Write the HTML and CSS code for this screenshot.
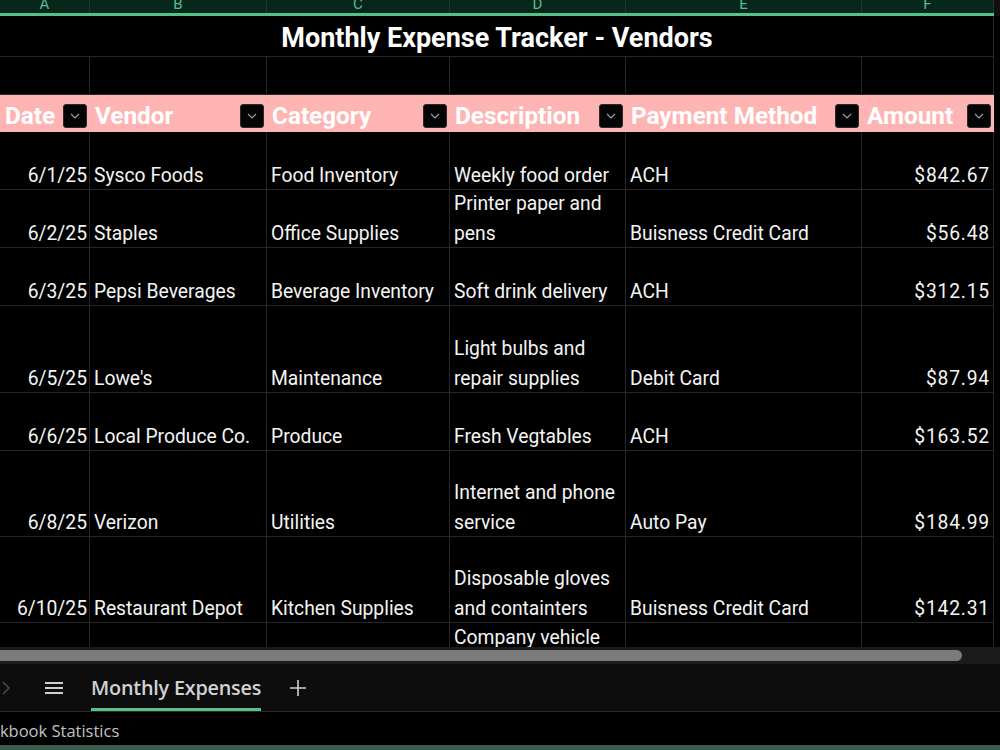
FILE: index.html
```html
<!DOCTYPE html>
<html lang="en">
<head>
  <meta charset="utf-8">
  <meta name="viewport" content="width=device-width, initial-scale=1">
  <title>Monthly Expenses</title>
  <link rel="stylesheet" href="styles.css">
</head>
<body>
  <div class="app">
    <!-- column letters -->
    <div class="colbar">
      <div class="cols">
        <span>A</span><span>B</span><span>C</span><span>D</span><span>E</span><span>F</span>
      </div>
      <div class="colbar-rest"></div>
    </div>

    <div class="sheet">
      <div class="grid">
        <div class="cell title">Monthly Expense Tracker - Vendors</div>

        <div class="cell"></div><div class="cell"></div><div class="cell"></div>
        <div class="cell"></div><div class="cell"></div><div class="cell"></div>

        <div class="cell head"><span>Date</span><button class="filter" aria-label="Filter Date"><svg viewBox="0 0 10 6" width="10" height="6"><path d="M1 1l4 4 4-4"/></svg></button></div>
        <div class="cell head"><span>Vendor</span><button class="filter" aria-label="Filter Vendor"><svg viewBox="0 0 10 6" width="10" height="6"><path d="M1 1l4 4 4-4"/></svg></button></div>
        <div class="cell head"><span>Category</span><button class="filter" aria-label="Filter Category"><svg viewBox="0 0 10 6" width="10" height="6"><path d="M1 1l4 4 4-4"/></svg></button></div>
        <div class="cell head"><span>Description</span><button class="filter" aria-label="Filter Description"><svg viewBox="0 0 10 6" width="10" height="6"><path d="M1 1l4 4 4-4"/></svg></button></div>
        <div class="cell head"><span>Payment Method</span><button class="filter" aria-label="Filter Payment Method"><svg viewBox="0 0 10 6" width="10" height="6"><path d="M1 1l4 4 4-4"/></svg></button></div>
        <div class="cell head"><span>Amount</span><button class="filter" aria-label="Filter Amount"><svg viewBox="0 0 10 6" width="10" height="6"><path d="M1 1l4 4 4-4"/></svg></button></div>

        <div class="cell num date">6/1/25</div>
        <div class="cell">Sysco Foods</div>
        <div class="cell">Food Inventory</div>
        <div class="cell wrap">Weekly food order</div>
        <div class="cell">ACH</div>
        <div class="cell num amt">$842.67</div>

        <div class="cell num date">6/2/25</div>
        <div class="cell">Staples</div>
        <div class="cell">Office Supplies</div>
        <div class="cell wrap">Printer paper and pens</div>
        <div class="cell">Buisness Credit Card</div>
        <div class="cell num amt">$56.48</div>

        <div class="cell num date">6/3/25</div>
        <div class="cell">Pepsi Beverages</div>
        <div class="cell">Beverage Inventory</div>
        <div class="cell wrap">Soft drink delivery</div>
        <div class="cell">ACH</div>
        <div class="cell num amt">$312.15</div>

        <div class="cell num date">6/5/25</div>
        <div class="cell">Lowe's</div>
        <div class="cell">Maintenance</div>
        <div class="cell wrap">Light bulbs and repair supplies</div>
        <div class="cell">Debit Card</div>
        <div class="cell num amt">$87.94</div>

        <div class="cell num date">6/6/25</div>
        <div class="cell">Local Produce Co.</div>
        <div class="cell">Produce</div>
        <div class="cell wrap">Fresh Vegtables</div>
        <div class="cell">ACH</div>
        <div class="cell num amt">$163.52</div>

        <div class="cell num date">6/8/25</div>
        <div class="cell">Verizon</div>
        <div class="cell">Utilities</div>
        <div class="cell wrap">Internet and phone service</div>
        <div class="cell">Auto Pay</div>
        <div class="cell num amt">$184.99</div>

        <div class="cell num date">6/10/25</div>
        <div class="cell">Restaurant Depot</div>
        <div class="cell">Kitchen Supplies</div>
        <div class="cell wrap">Disposable gloves and containters</div>
        <div class="cell">Buisness Credit Card</div>
        <div class="cell num amt">$142.31</div>

        <div class="cell top"></div>
        <div class="cell top"></div>
        <div class="cell top"></div>
        <div class="cell top wrap">Company vehicle</div>
        <div class="cell top"></div>
        <div class="cell top"></div>
      </div>
    </div>

    <div class="hscroll"><div class="thumb"></div></div>

    <div class="tabs">
      <svg class="prev" viewBox="0 0 10 16" width="10" height="16"><path d="M2 2l6 6-6 6"/></svg>
      <svg class="menu" viewBox="0 0 20 12" width="20" height="12"><path d="M1 1h18M1 6h18M1 11h18"/></svg>
      <div class="tab active">Monthly Expenses</div>
      <svg class="add" viewBox="0 0 18 18" width="18" height="18"><path d="M9 1v16M1 9h16"/></svg>
    </div>

    <div class="status"><span>Workbook Statistics</span></div>
  </div>
</body>
</html>
```

FILE: styles.css
```css
html, body {
  margin: 0;
  background: #000;
}
.app {
  width: 1000px;
  height: 750px;
  display: flex;
  flex-direction: column;
  overflow: hidden;
  font-family: Roboto, "Liberation Sans", sans-serif;
}

/* column letters */
.colbar {
  display: flex;
  height: 16px;
  flex: none;
}
.cols {
  display: grid;
  grid-template-columns: 90px 177px 183px 176px 236px 132px;
  width: 994px;
  background: #07271a;
  border-bottom: 3px solid #55c089;
  box-sizing: border-box;
}
.cols span {
  border-right: 1px solid #1a3b2a;
  color: #5cba92;
  font-size: 15px;
  line-height: 9px;
  text-align: center;
}
.colbar-rest {
  flex: 1;
  background: #101010;
}

/* sheet grid; gridlines are inset shadows so text can sit on the cell edge */
.sheet {
  flex: 1;
  overflow: hidden;
}
.grid {
  display: grid;
  width: 994px;
  grid-template-columns: 90px 177px 183px 176px 236px 132px;
  grid-template-rows: 41px 38px 37px 58px 58px 58px 87px 58px 86px 86px 87px;
}
.cell {
  box-shadow: inset -1px -1px 0 #262626;
  color: #f4f4f4;
  font-size: 19.3px;
  line-height: 29.5px;
  padding: 0 4px;
  display: flex;
  align-items: flex-end;
  white-space: nowrap;
  overflow: hidden;
}
.cell.wrap {
  white-space: normal;
}
.cell.num {
  justify-content: flex-end;
  padding-right: 5px;
}
.cell.amt {
  letter-spacing: 0.8px;
  padding-right: 4px;
}
.cell.date {
  padding-right: 3px;
}
.cell.top {
  align-items: flex-start;
}

.title {
  grid-column: span 6;
  justify-content: center;
  align-items: center;
  padding-top: 4px;
  font-size: 27px;
  font-weight: 700;
  color: #fff;
}

.head {
  background: #ffb4b4;
  box-shadow: none;
  align-items: center;
  justify-content: space-between;
  padding: 4px 3px 0 5px;
  font-size: 24.3px;
  font-weight: 700;
  color: #fff;
}
.filter {
  flex: none;
  width: 24px;
  height: 24px;
  padding: 0;
  border: 1px solid #2a2a2a;
  border-radius: 3px;
  background: #050505;
  display: flex;
  align-items: center;
  justify-content: center;
}
.filter svg {
  fill: none;
  stroke: #9c9c9c;
  stroke-width: 1.2;
}

/* horizontal scrollbar */
.hscroll {
  flex: none;
  height: 17px;
  box-sizing: border-box;
  padding: 3px 38px 3px 0;
  background: #1b1b1b;
}
.thumb {
  height: 11px;
  background: #7b7b7b;
  border-radius: 0 6px 6px 0;
}

/* sheet tabs */
.tabs {
  flex: none;
  height: 48px;
  box-sizing: border-box;
  display: flex;
  align-items: center;
  background: #0d0d0d;
  border-bottom: 1px solid #2b2b2b;
  font-family: "Open Sans", "Noto Sans", sans-serif;
}
.tabs svg {
  fill: none;
  stroke-width: 2;
}
.prev {
  margin-left: 1px;
  stroke: #4a4a4a;
  stroke-width: 1.5 !important;
}
.menu {
  margin-left: 33px;
  stroke: #cfcfcf;
}
.tab {
  align-self: stretch;
  display: flex;
  align-items: center;
  margin-left: 27px;
  padding: 3px 0 0;
  border-bottom: 3px solid transparent;
  color: #d2d2d2;
  font-size: 19.8px;
  font-weight: 600;
  letter-spacing: -0.2px;
}
.tab.active {
  border-bottom-color: #5dbd88;
}
.add {
  margin-left: 28px;
  stroke: #cfcfcf;
  stroke-width: 1.6 !important;
}

/* status bar */
.status {
  flex: none;
  height: 38px;
  display: flex;
  align-items: center;
  padding-top: 4px;
  box-sizing: border-box;
  border-bottom: 5px solid #375e4d;
  color: #c2c2c2;
  font-family: "Open Sans", "Noto Sans", sans-serif;
  font-size: 16.5px;
}
.status span {
  margin-left: -32px;
}
```
